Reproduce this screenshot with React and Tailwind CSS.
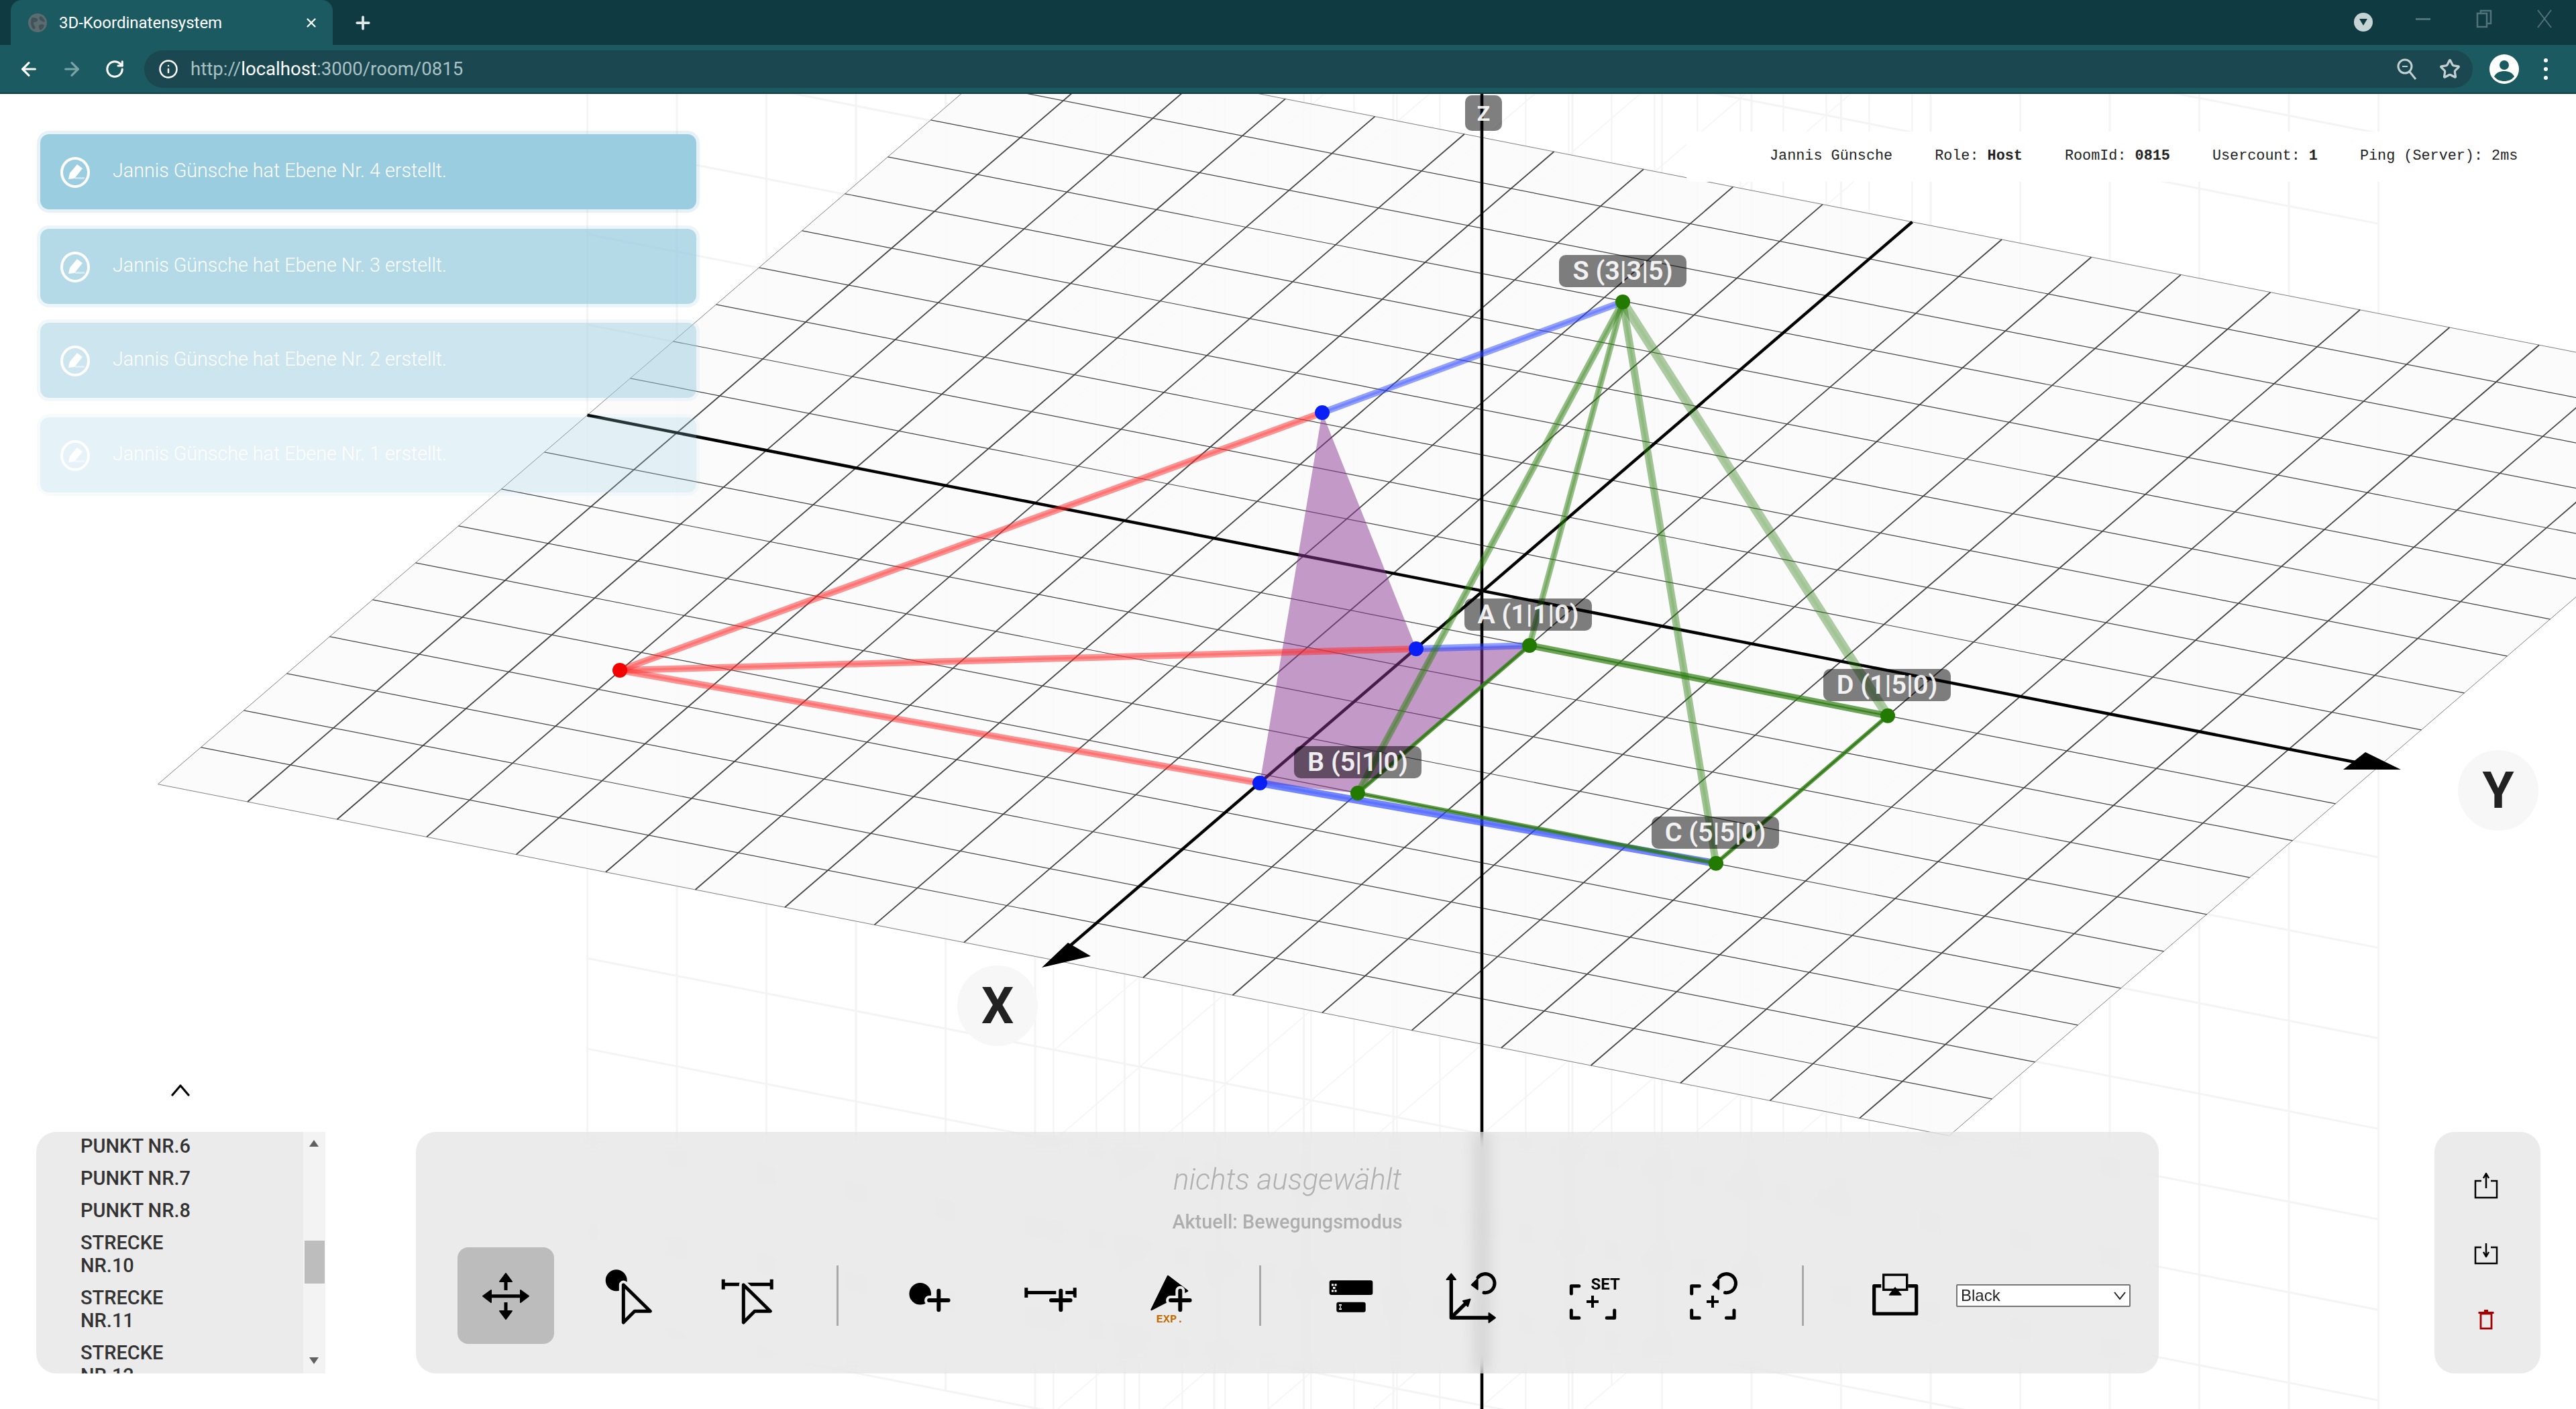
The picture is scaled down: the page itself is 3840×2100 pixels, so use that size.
import React from 'react';
import { ArrowLeft, ArrowRight, RotateCw, Info, Star, X, Plus } from 'lucide-react';

const P = (x, y, z = 0) => [2210.5 - 64 * x + 133.5 * y, 880.8 + 55 * x + 26.2 * y - 134.9 * z];
const range = (a, b) => Array.from({ length: b - a + 1 }, (_, i) => a + i);

const L = ({ a, b, ...rest }) => <line x1={a[0]} y1={a[1]} x2={b[0]} y2={b[1]} {...rest} />;

const Tube = ({ a, b, c, w, o = 0.5, core = 0.3 }) => (
  <g>
    <L a={a} b={b} stroke={c} strokeWidth={w} strokeOpacity={o} />
    <L a={a} b={b} stroke={c} strokeWidth={w * 0.35} strokeOpacity={core} />
  </g>
);

const A = P(1, 1), B = P(5, 1), C = P(5, 5), D = P(1, 5), S = P(3, 3, 5);
const P1 = [1971, 615], P2 = [2111, 967], P3 = [1878, 1167], R = [924, 999];

function Scene() {
  const RED = '#ff2a2a', BLUE = '#2a46ff', GREEN = '#2f7f12';
  const pts = (arr) => arr.map((p) => p.join(',')).join(' ');
  return (
    <svg className="absolute left-0 top-0" width="3840" height="1960" viewBox="0 140 3840 1960">
      {/* faint side planes */}
      <g stroke="#f4f4f4" strokeWidth="3">
        {range(-10, 10).map((k) => <L key={'a' + k} a={P(0, k, -10)} b={P(0, k, 10)} />)}
        {range(-10, 10).map((k) => <L key={'b' + k} a={P(0, -10, k)} b={P(0, 10, k)} />)}
        {range(-10, 10).map((k) => <L key={'c' + k} a={P(k, 0, -10)} b={P(k, 0, 10)} strokeWidth="2" />)}
        {range(-10, 10).map((k) => <L key={'d' + k} a={P(-10, 0, k)} b={P(10, 0, k)} strokeWidth="1.5" />)}
      </g>
      {/* ground plane */}
      <polygon points={pts([P(-10, -10), P(-10, 10), P(10, 10), P(10, -10)])} fill="#fafafa" fillOpacity="0.85" stroke="#808080" strokeWidth="1" />
      <g stroke="#444">
        {range(-9, 9).map((k) => <L key={'x' + k} a={P(-10, k)} b={P(10, k)} strokeWidth="1.8" />)}
        {range(-9, 9).map((k) => <L key={'y' + k} a={P(k, -10)} b={P(k, 10)} strokeWidth="1.2" />)}
      </g>
      {/* axes */}
      <g stroke="#000" strokeWidth="4.5">
        <L a={P(-10, 0)} b={P(10, 0)} />
        <L a={P(0, -10)} b={P(0, 10)} />
        <L a={[2209, 140]} b={[2209, 2100]} />
      </g>
      <polygon points="3493,1147 3526,1121 3579,1147" fill="#000" />
      <polygon points="1553,1442 1626,1425 1592,1405" fill="#000" />
      {/* purple polygon */}
      <polygon points={pts([P1, P2, A, B, P3])} fill="#893793" fillOpacity="0.5" />
      {/* red + blue */}
      <Tube a={R} b={P1} c={RED} w={10} />
      <Tube a={R} b={P2} c={RED} w={10} />
      <Tube a={R} b={P3} c={RED} w={10} />
      <Tube a={P1} b={S} c={BLUE} w={10} />
      <Tube a={P2} b={A} c={BLUE} w={10} />
      <Tube a={P3} b={C} c={BLUE} w={11} o={0.65} />
      {/* pyramid */}
      <Tube a={S} b={A} c={GREEN} w={9} />
      <Tube a={S} b={B} c={GREEN} w={10} />
      <Tube a={S} b={C} c={GREEN} w={11} o={0.45} core={0.15} />
      <Tube a={S} b={D} c={GREEN} w={14} o={0.38} core={0.08} />
      <Tube a={A} b={B} c={GREEN} w={6} o={0.8} />
      <Tube a={B} b={C} c={GREEN} w={6} o={0.75} />
      <Tube a={C} b={D} c={GREEN} w={6} o={0.8} />
      <Tube a={D} b={A} c={GREEN} w={10} o={0.7} />
      {/* points */}
      <g fill="#0a1ff5">
        {[P1, P2, P3].map((p, i) => <circle key={i} cx={p[0]} cy={p[1]} r="11" />)}
      </g>
      <circle cx={R[0]} cy={R[1]} r="11" fill="#f50000" />
      <g fill="#237a00">
        {[A, B, C, D, S].map((p, i) => <circle key={i} cx={p[0]} cy={p[1]} r="11" />)}
      </g>
    </svg>
  );
}

const labelCls = 'absolute h-[48px] w-[190px] rounded-[10px] bg-black/50 text-white/90 text-[39.5px] font-semibold flex items-center justify-center whitespace-nowrap';

function Notice({ n, cls }) {
  return (
    <div className={`h-[122px] w-[988px] rounded-[18px] border-[5px] border-[#9bcde0]/25 bg-[#9bcde0] bg-clip-padding flex items-start pl-[30px] pt-[34px] gap-[34px] ${cls}`}>
      <svg width="44" height="46" viewBox="0 0 44 46">
        <ellipse cx="22" cy="23" rx="20" ry="21" fill="none" stroke="#fff" strokeWidth="4" />
        <polygon points="12,33 14,24 25,11 33,17 21,32" fill="#fff" />
        <line x1="22" y1="31.5" x2="36" y2="31.5" stroke="#fff" strokeOpacity="0.45" strokeWidth="3" />
      </svg>
      <span className="text-white text-[28.7px] font-light leading-[40px] whitespace-nowrap">Jannis Günsche hat Ebene Nr. {n} erstellt.</span>
    </div>
  );
}

const BG = '#ebebeb';
function Tool({ active, children }) {
  return (
    <div className={`h-[144px] w-[144px] shrink-0 rounded-[16px] ${active ? 'bg-[#bcbcbc]' : ''}`}>
      <svg width="144" height="144" viewBox="0 0 144 144">{children}</svg>
    </div>
  );
}
const Sep = ({ cls }) => <div className={`ml-[25px] h-[90px] w-[3px] shrink-0 bg-[#a9a9a9] ${cls}`} />;

const Cursor = ({ dx = 0 }) => {
  const p = `${67.3 + dx},56 ${107.3 + dx},95.3 ${84 + dx},95.3 ${67.3 + dx},112`;
  return (
    <g strokeLinejoin="round">
      <polygon points={p} fill={BG} stroke={BG} strokeWidth="13" />
      <polygon points={p} fill={BG} stroke="#000" strokeWidth="5" />
    </g>
  );
};
const PlusMark = ({ x, y, arm = 14.3 }) => (
  <g strokeLinecap="round">
    <path d={`M${x - arm} ${y}H${x + arm}M${x} ${y - arm}V${y + arm}`} stroke={BG} strokeWidth="14" fill="none" />
    <path d={`M${x - arm} ${y}H${x + arm}M${x} ${y - arm}V${y + arm}`} stroke="#000" strokeWidth="6" fill="none" />
  </g>
);
const Corners = ({ l, r }) => (
  <path d={`M${l} 69V57.7H${l + 11.5}M${l} 94V105.3H${l + 11.5}M${r} 94V105.3H${r - 11.5}`} fill="none" stroke="#000" strokeWidth="5" strokeLinejoin="round" strokeLinecap="round" />
);
const Rotate = ({ dx = 0 }) => (
  <g>
    <path d={`M${91 + dx} 67.5A14 14 0 1 0 ${82 + dx} 45`} fill="none" stroke="#000" strokeWidth="5" strokeLinecap="round" />
    <polygon points={`${72.7 + dx},56 ${81.7 + dx},47 ${81.7 + dx},62.7`} fill="#000" stroke="#000" strokeWidth="2" strokeLinejoin="round" />
  </g>
);

const items = [['PUNKT NR.6'], ['PUNKT NR.7'], ['PUNKT NR.8'], ['STRECKE', 'NR.10'], ['STRECKE', 'NR.11'], ['STRECKE', 'NR.12']];

export default function App() {
  return (
    <div className="flex h-[2100px] w-[3840px] flex-col overflow-hidden bg-white font-['Roboto',sans-serif]">
      {/* tab strip */}
      <div className="flex h-[67px] shrink-0 items-center bg-[#103a41]">
        <div className="ml-[16px] flex h-[67px] w-[480px] items-center rounded-t-[16px] bg-[#1a5a60] pl-[26px]">
          <svg width="28" height="28" viewBox="0 0 28 28">
            <circle cx="14" cy="14" r="14" fill="#5b6c70" />
            <path d="M6 6c4 1 7 0 8 3s-3 4-5 4-1 4 1 6-1 6-3 4S2 12 6 6ZM18 4c3 1 6 4 7 8-3 2-5-1-7-2s-2-5 0-6ZM17 17c3-1 6-1 7 1-1 3-3 6-6 7-2-3-3-6-1-8Z" fill="#3f5358" />
          </svg>
          <span className="ml-[18px] text-[24px] text-white whitespace-nowrap">3D-Koordinatensystem</span>
          <X className="ml-[122px] text-white" size={22} strokeWidth={2.5} />
        </div>
        <Plus className="ml-[30px] text-[#dfe7e8]" size={30} strokeWidth={3} />
        <div className="ml-auto flex items-start self-stretch pt-[14px]">
          <div className="mt-[5px] flex h-[28px] w-[28px] items-center justify-center rounded-full bg-[#c5d3d5]">
            <div className="h-0 w-0 border-x-[6px] border-t-[10px] border-x-transparent border-t-[#103a41]" />
          </div>
          <div className="ml-[64px] mt-[13px] h-[3px] w-[22px] bg-[#4f7378]" />
          <svg className="ml-[68px]" width="24" height="28" viewBox="0 0 24 28" fill="none" stroke="#4f7378" strokeWidth="2.5">
            <rect x="2" y="6" width="14" height="20" />
            <path d="M7 6V2H22V21H16" />
          </svg>
          <svg className="ml-[66px]" width="24" height="28" viewBox="0 0 24 28" fill="none" stroke="#4f7378" strokeWidth="2">
            <path d="M2 1L22 27M22 1L2 27" />
          </svg>
          <div className="w-[35px]" />
        </div>
      </div>
      {/* toolbar */}
      <div className="flex h-[73px] shrink-0 items-center border-b-[2px] border-[#0e3a40] bg-[#1a5a60]">
        <ArrowLeft className="ml-[27px] text-white" size={32} strokeWidth={2.4} />
        <ArrowRight className="ml-[32px] text-[#7ba3a6]" size={32} strokeWidth={2.4} />
        <RotateCw className="ml-[33px] text-white" size={30} strokeWidth={2.4} />
        <div className="ml-[29px] flex h-[56px] w-[3471px] items-center rounded-full bg-[#1b4850] pl-[21px]">
          <Info className="text-white" size={30} strokeWidth={2} />
          <span className="ml-[18px] text-[27.6px] text-[#a9c2c5] whitespace-nowrap">http://<span className="text-white">localhost</span>:3000/room/0815</span>
          <svg className="ml-auto" width="32" height="34" viewBox="0 0 32 34" fill="none" stroke="#c4cfd0" strokeWidth="3">
            <circle cx="13" cy="13" r="10" />
            <path d="M20 21L29 32" />
            <path d="M9 13H17" strokeWidth="2" />
          </svg>
          <Star className="ml-[32px] mr-[18px] text-[#c4cfd0]" size={32} strokeWidth={2.4} />
        </div>
        <svg className="ml-[25px]" width="44" height="44" viewBox="0 0 44 44">
          <circle cx="22" cy="22" r="22" fill="#fff" />
          <circle cx="22" cy="16" r="7" fill="#1a5a60" />
          <path d="M7 33c3-6 9-8 15-8s12 2 15 8c-4 5-9 7-15 7S11 38 7 33Z" fill="#1a5a60" />
        </svg>
        <div className="ml-[37px] flex flex-col gap-[7px]">
          <div className="h-[6px] w-[6px] rounded-full bg-white" />
          <div className="h-[6px] w-[6px] rounded-full bg-white" />
          <div className="h-[6px] w-[6px] rounded-full bg-white" />
        </div>
      </div>

      {/* canvas */}
      <div className="relative flex-1 overflow-hidden">
        <Scene />

        {/* point labels */}
        <div className="absolute left-[2184px] top-[2px] flex h-[53px] w-[55px] items-center justify-center rounded-[10px] bg-black/50 text-[32px] font-bold text-white/90">Z</div>
        <div className={`${labelCls} left-[2324px] top-[240px]`}>S (3|3|5)</div>
        <div className={`${labelCls} left-[2183px] top-[752px]`}>A (1|1|0)</div>
        <div className={`${labelCls} left-[2718px] top-[857px]`}>D (1|5|0)</div>
        <div className={`${labelCls} left-[2462px] top-[1077px]`}>C (5|5|0)</div>
        <div className={`${labelCls} left-[1929px] top-[972px]`}>B (5|1|0)</div>

        <div className="absolute left-[1427px] top-[1299px] flex h-[120px] w-[120px] items-center justify-center rounded-full bg-[#f7f7f7] text-[76px] font-bold text-[#222]">X</div>
        <div className="absolute left-[3664px] top-[978px] flex h-[120px] w-[120px] items-center justify-center rounded-full bg-[#f7f7f7] text-[76px] font-bold text-[#222]">Y</div>

        {/* status band */}
        <div className="absolute right-0 top-[56px] flex h-[75px] w-[1326px] items-center gap-[63px] bg-white pl-[124px] font-['Liberation_Mono',monospace] text-[21.8px] text-[#222] whitespace-nowrap">
          <span>Jannis Günsche</span>
          <span>Role: <b>Host</b></span>
          <span>RoomId: <b>0815</b></span>
          <span>Usercount: <b>1</b></span>
          <span>Ping (Server): 2ms</span>
        </div>

        {/* notifications */}
        <div className="absolute left-[55px] top-[55px] flex flex-col gap-[18.5px]">
          <Notice n={4} cls="" />
          <Notice n={3} cls="opacity-75" />
          <Notice n={2} cls="opacity-50" />
          <Notice n={1} cls="opacity-25" />
        </div>

        {/* bottom bar */}
        <div className="absolute bottom-[53px] left-[54px] flex h-[360px] items-start">
          <svg className="absolute left-[201px] top-[-71px]" width="28" height="18" viewBox="0 0 28 18" fill="none" stroke="#000" strokeWidth="3.2" strokeLinecap="round" strokeLinejoin="round">
            <path d="M2 16L14 2L26 16" />
          </svg>
          {/* list */}
          <div className="flex h-[360px] w-[431px] shrink-0 overflow-hidden rounded-l-[30px] bg-[#ebebeb]">
            <div className="-mt-[3px] flex-1 pl-[66px] text-[29px] font-medium leading-[34px] text-[#333]">
              {items.map((it, i) => (
                <div key={i} className="py-[7px]">
                  {it.map((t) => <div key={t}>{t}</div>)}
                </div>
              ))}
            </div>
            <div className="relative h-full w-[33px] shrink-0 bg-[#f3f3f3]">
              <div className="absolute left-[9px] top-[12px] h-0 w-0 border-x-[7px] border-b-[10px] border-x-transparent border-b-[#606060]" />
              <div className="absolute left-[2px] top-[162px] h-[64px] w-[30px] bg-[#bdbdbd]" />
              <div className="absolute bottom-[14px] left-[9px] h-0 w-0 border-x-[7px] border-t-[10px] border-x-transparent border-t-[#606060]" />
            </div>
          </div>

          {/* main toolbar */}
          <div className="ml-[135px] flex h-[360px] w-[2598px] shrink-0 flex-col rounded-[30px] bg-[#dadada]/55 backdrop-blur-[12px]">
            <div className="mt-[45px] text-center text-[44px] font-light italic leading-[52px] text-[#b0b0b0]">nichts ausgewählt</div>
            <div className="mt-[19px] text-center text-[28.8px] font-medium leading-[36px] text-[#aeaeae]">Aktuell: Bewegungsmodus</div>
            <div className="mt-[20px] flex items-center gap-[36px] pl-[62px]">
              <Tool active>
                <g fill="#000" stroke="#000" strokeWidth="2" strokeLinejoin="round">
                  <polygon points="72,39 81,51 63,51" />
                  <polygon points="72,107 81,95 63,95" />
                  <polygon points="38,72.7 50,64 50,82" />
                  <polygon points="106,72.7 94,64 94,82" />
                </g>
                <path d="M72 51V64M72 82V95M50 72.7H94" stroke="#000" strokeWidth="5" fill="none" />
              </Tool>
              <Tool>
                <circle cx="56.7" cy="49.3" r="16" fill="#000" />
                <Cursor />
              </Tool>
              <Tool>
                <path d="M36.2 47.7V62.7M108.2 47.7V62.7" stroke="#000" strokeWidth="5" fill="none" />
                <path d="M36 55.2H108" stroke="#000" strokeWidth="5" fill="none" />
                <Cursor dx={-1} />
              </Tool>
              <Sep cls="mr-[26px]" />
              <Tool>
                <circle cx="59.7" cy="69.3" r="16.3" fill="#000" />
                <PlusMark x={87.3} y={79} />
              </Tool>
              <Tool>
                <path d="M37.8 60.3V75M110.2 60.3V75" stroke="#000" strokeWidth="5" fill="none" />
                <path d="M38 67.5H110" stroke="#000" strokeWidth="5" fill="none" />
                <PlusMark x={89.3} y={79} />
              </Tool>
              <Tool>
                <polygon points="69,43 98,65 44.5,93" fill="#000" stroke="#000" strokeWidth="2.5" strokeLinejoin="round" />
                <PlusMark x={87.3} y={79} />
                <text x="72" y="112" textAnchor="middle" fontFamily="Liberation Mono, monospace" fontWeight="700" fontSize="17" fill="#c46a00">EXP.</text>
              </Tool>
              <Sep cls="mr-[25px]" />
              <Tool>
                <rect x="40.7" y="49.3" width="64.6" height="21.7" rx="3" fill="#000" />
                <rect x="51.3" y="81.7" width="43.4" height="15" rx="3" fill="#000" />
                <g fill="#fff">
                  <rect x="44" y="54.5" width="3" height="3" /><rect x="48.5" y="54.5" width="3" height="3" />
                  <rect x="46" y="59" width="3.5" height="3" />
                  <rect x="44" y="63.5" width="3" height="3" /><rect x="48.5" y="63.5" width="3" height="3" />
                  <rect x="55" y="85" width="4" height="2" /><rect x="56" y="88" width="2" height="2" /><rect x="55" y="91" width="4" height="2" />
                </g>
              </Tool>
              <Tool>
                <g fill="none" stroke="#000" strokeWidth="5.3" strokeLinecap="round" strokeLinejoin="round">
                  <path d="M42.3 47V105H100" />
                  <path d="M44 103L66 81.5" />
                </g>
                <g fill="#000" stroke="#000" strokeWidth="2" strokeLinejoin="round">
                  <polygon points="42.3,39.5 49,48 35.5,48" />
                  <polygon points="108,105 98.5,98 98.5,112" />
                  <polygon points="70.5,77.5 67,88 60,80" />
                </g>
                <Rotate />
              </Tool>
              <Tool>
                <Corners l={41.3} r={105.7} />
                <path d="M64 81H82M73 72V90" stroke="#000" strokeWidth="4" fill="none" />
                <text x="70.5" y="62.7" fontFamily="Roboto, sans-serif" fontWeight="700" fontSize="24" fill="#000">SET</text>
              </Tool>
              <Tool>
                <Corners l={40.7} r={104} />
                <path d="M63 81H81M72 72V90" stroke="#000" strokeWidth="4" fill="none" />
                <Rotate dx={-0.5} />
              </Tool>
              <Sep cls="mr-[25px]" />
              <Tool>
                <path d="M54.3 57.7H43.7V99H106.7V57.7H94.3" fill="none" stroke="#000" strokeWidth="5.2" strokeLinejoin="round" />
                <rect x="57.7" y="41" width="35" height="22.3" fill="none" stroke="#000" strokeWidth="3.4" />
                <polygon points="75,60 84,71 66.5,71" fill="#000" stroke="#000" strokeWidth="1.5" strokeLinejoin="round" />
              </Tool>
              <div className="relative ml-[-14px] h-[34px] w-[260px] shrink-0">
                <select defaultValue="Black" className="h-full w-full appearance-none rounded-[2px] border-[2px] border-[#767676] bg-white pl-[5px] font-['Liberation_Sans',sans-serif] text-[24px] leading-[28px] text-[#222]">
                  <option>Black</option>
                </select>
                <svg className="pointer-events-none absolute right-[7px] top-[11px]" width="18" height="12" viewBox="0 0 18 12" fill="none" stroke="#222" strokeWidth="2">
                  <path d="M1 1L9 11L17 1" />
                </svg>
              </div>
            </div>
          </div>

          {/* right panel */}
          <div className="ml-[411px] flex h-[360px] w-[158px] shrink-0 flex-col items-center rounded-[30px] bg-[#ebebeb]">
            <svg className="-ml-[5px] mt-[51px]" width="60" height="60" viewBox="0 0 60 60" fill="none" stroke="#000" strokeWidth="2.5">
              <path d="M23 22H14V47H46V22H37" />
              <path d="M30 12V33" />
              <path d="M26 18L30 11L34 18" strokeLinejoin="round" />
            </svg>
            <svg className="-ml-[5px] mt-[41px]" width="60" height="60" viewBox="0 0 60 60" fill="none" stroke="#000" strokeWidth="2.5">
              <path d="M23 20H14V44H46V20H37" />
              <path d="M30 14V33" />
              <path d="M26 27L30 34L34 27" strokeLinejoin="round" />
            </svg>
            <svg className="-ml-[5px] mt-[37px]" width="60" height="60" viewBox="0 0 60 60" fill="none" stroke="#a40000" strokeWidth="2.8">
              <rect x="22" y="22" width="16" height="22" />
              <path d="M18.5 20.5H41.5" strokeWidth="3" />
              <path d="M27 17.5H33" strokeWidth="3" />
            </svg>
          </div>
        </div>
      </div>
    </div>
  );
}
